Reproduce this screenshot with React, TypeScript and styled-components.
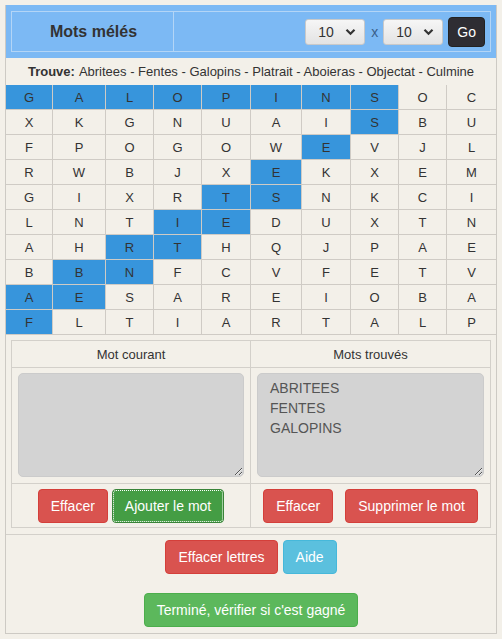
import React from "react";
import styled, { createGlobalStyle, css } from "styled-components";

const GlobalStyle = createGlobalStyle`
  html, body { margin: 0; padding: 0; background: #f3f0e9; }
  body { font-family: "Liberation Sans", Arial, sans-serif; color: #333; }
  * { box-sizing: border-box; }
`;

const Frame = styled.div`
  margin: 5px 0 0 5px;
  width: 492px;
  border: 1px solid #cdcac4;
  border-top: none;
  background: #f3f0e9;
`;

const Header = styled.div`
  background: #7cb9f4;
  padding: 6px 5px 6px 5px;
`;

const HeaderTable = styled.div`
  display: grid;
  grid-template-columns: 162px 1fr;
  height: 41px;
  border: 1px solid #b3d5f6;
`;

const TitleCell = styled.div`
  display: flex;
  align-items: center;
  justify-content: center;
  border-right: 1px solid #b3d5f6;
  font-size: 16px;
  font-weight: bold;
  color: #333;
  padding-left: 2px;
`;

const ControlsCell = styled.div`
  display: flex;
  align-items: center;
  justify-content: flex-end;
  padding-right: 5px;
  gap: 5px;
`;

const FakeSelect = styled.div`
  display: flex;
  flex: 0 0 60px;
  align-items: center;
  justify-content: space-between;
  width: 60px;
  height: 26px;
  padding: 0 8px 0 12px;
  border: 1px solid #c9c9c9;
  border-radius: 3px;
  background: linear-gradient(#f6f6f6, #e3e3e3);
  font-size: 14px;
  color: #333;
`;

const Times = styled.span`
  font-size: 14px;
  color: #3a5f8a;
  margin: 0 0 0 1px;
`;

const GoButton = styled.button`
  height: 30px;
  padding: 0 8px;
  border: 1px solid #222;
  border-radius: 4px;
  background: #2e2d33;
  color: #fff;
  font-family: inherit;
  font-size: 14px;
`;

const FindRow = styled.div`
  height: 27px;
  display: flex;
  align-items: center;
  justify-content: center;
  font-size: 13px;
  color: #333;
  b { margin-right: 4px; }
`;

const Grid = styled.div`
  display: grid;
  grid-template-columns: 47px 53px 48px 48px 49px 51px 49px 48px 48px 49px;
  grid-auto-rows: 25px;
`;

const Cell = styled.div<{ $on: boolean }>`
  display: flex;
  align-items: center;
  justify-content: center;
  font-size: 13px;
  color: #333;
  border-right: 1px solid #cfcbc5;
  border-bottom: 1px solid #cfcbc5;
  background: ${(p) => (p.$on ? "#3795dc" : "transparent")};
  &:nth-child(10n) { border-right: none; }
`;

const Panel = styled.div`
  margin: 5px 5px 0 5px;
  display: grid;
  grid-template-columns: 1fr 1fr;
  grid-template-rows: 27px 116px 43px;
  border: 1px solid #d3d0ca;
`;

const PanelHead = styled.div<{ $right?: boolean }>`
  display: flex;
  align-items: center;
  justify-content: center;
  font-size: 13px;
  color: #333;
  border-bottom: 1px solid #d3d0ca;
  ${(p) => !p.$right && css`border-right: 1px solid #d3d0ca;`}
`;

const PanelBody = styled.div<{ $right?: boolean }>`
  padding: 5px 6px 6px;
  border-bottom: 1px solid #d3d0ca;
  ${(p) => !p.$right && css`border-right: 1px solid #d3d0ca;`}
`;

const Area = styled.textarea`
  display: block;
  width: 100%;
  height: 104px;
  margin: 0;
  padding: 4px 12px;
  background: #d3d3d3;
  border: 1px solid #cbcbcb;
  border-radius: 5px;
  font-family: "Liberation Sans", Arial, sans-serif;
  font-size: 14px;
  line-height: 20px;
  color: #555;
  outline: none;
`;

const PanelFoot = styled.div<{ $right?: boolean; $gap: number }>`
  display: flex;
  align-items: center;
  justify-content: center;
  gap: ${(p) => p.$gap}px;
  ${(p) => !p.$right && css`border-right: 1px solid #d3d0ca;`}
`;

const variants = {
  red: css`background: #d9534f; border-color: #d43f3a;`,
  green: css`background: #5cb85c; border-color: #4cae4c;`,
  greenActive: css`
    background: #449d44;
    border-color: #398439;
    outline: 1px dotted #fff;
    outline-offset: -2px;
  `,
  blue: css`background: #5bc0de; border-color: #46b8da;`,
};

const Btn = styled.button<{ $v: keyof typeof variants }>`
  height: 34px;
  padding: 0 12px;
  border: 1px solid;
  border-radius: 4px;
  color: #fff;
  font-family: "Liberation Sans", Arial, sans-serif;
  font-size: 14px;
  ${(p) => variants[p.$v]}
`;

const Footer = styled.div`
  margin-top: 6px;
  border-top: 1px solid #d3d0ca;
  padding: 5px 0 6px;
  display: flex;
  flex-direction: column;
  align-items: center;
  gap: 19px;
`;

const BtnRow = styled.div`
  display: flex;
  gap: 5px;
  justify-content: center;
`;

const Chevron = () => (
  <svg width="11" height="8" viewBox="0 0 11 8">
    <path d="M1.5 1.8 L5.5 5.8 L9.5 1.8" fill="none" stroke="#333" strokeWidth="2.2" />
  </svg>
);

const rows = [
  "GALOPINSOC",
  "XKGNUAISBU",
  "FPOGOWEVJL",
  "RWBJXEKXEM",
  "GIXRTSNKCI",
  "LNTIEDUXTN",
  "AHRTHQJPAE",
  "BBNFCVFETV",
  "AESAREIOBA",
  "FLTIARTALP",
];

const hits: number[][] = [
  [0, 1, 2, 3, 4, 5, 6, 7],
  [7],
  [6],
  [5],
  [4, 5],
  [3, 4],
  [2, 3],
  [1, 2],
  [0, 1],
  [0],
];

export default function App() {
  return (
    <>
      <GlobalStyle />
      <Frame>
        <Header>
          <HeaderTable>
            <TitleCell>Mots mélés</TitleCell>
            <ControlsCell>
              <FakeSelect>
                <span>10</span>
                <Chevron />
              </FakeSelect>
              <Times>x</Times>
              <FakeSelect>
                <span>10</span>
                <Chevron />
              </FakeSelect>
              <GoButton>Go</GoButton>
            </ControlsCell>
          </HeaderTable>
        </Header>
        <FindRow>
          <b>Trouve:</b> Abritees - Fentes - Galopins - Platrait - Aboieras - Objectat - Culmine
        </FindRow>
        <Grid>
          {rows.map((r, ri) =>
            r.split("").map((ch, ci) => (
              <Cell key={`${ri}-${ci}`} $on={hits[ri].includes(ci)}>
                {ch}
              </Cell>
            ))
          )}
        </Grid>
        <Panel>
          <PanelHead>Mot courant</PanelHead>
          <PanelHead $right>Mots trouvés</PanelHead>
          <PanelBody>
            <Area readOnly value="" />
          </PanelBody>
          <PanelBody $right>
            <Area readOnly value={"ABRITEES\nFENTES\nGALOPINS"} />
          </PanelBody>
          <PanelFoot $gap={4}>
            <Btn $v="red">Effacer</Btn>
            <Btn $v="greenActive">Ajouter le mot</Btn>
          </PanelFoot>
          <PanelFoot $right $gap={12}>
            <Btn $v="red">Effacer</Btn>
            <Btn $v="red">Supprimer le mot</Btn>
          </PanelFoot>
        </Panel>
        <Footer>
          <BtnRow>
            <Btn $v="red">Effacer lettres</Btn>
            <Btn $v="blue">Aide</Btn>
          </BtnRow>
          <Btn $v="green">Terminé, vérifier si c'est gagné</Btn>
        </Footer>
      </Frame>
    </>
  );
}
